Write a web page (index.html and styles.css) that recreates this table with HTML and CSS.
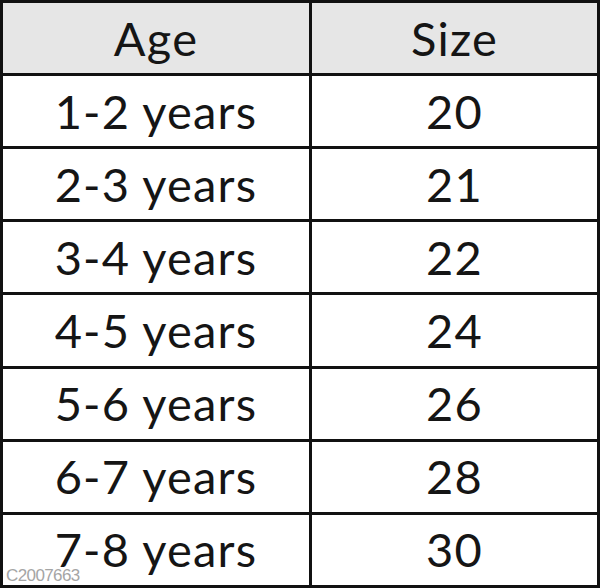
FILE: index.html
```html
<!DOCTYPE html>
<html>
<head>
<meta charset="utf-8">
<link rel="stylesheet" href="styles.css">
</head>
<body>
<div class="wrap">
<table class="sizes">
<thead>
<tr><th>Age</th><th>Size</th></tr>
</thead>
<tbody>
<tr><td>1-2 years</td><td>20</td></tr>
<tr><td>2-3 years</td><td>21</td></tr>
<tr><td>3-4 years</td><td>22</td></tr>
<tr><td>4-5 years</td><td>24</td></tr>
<tr><td>5-6 years</td><td>26</td></tr>
<tr><td>6-7 years</td><td>28</td></tr>
<tr><td>7-8 years</td><td>30</td></tr>
</tbody>
</table>
<span class="mark">C2007663</span>
</div>
</body>
</html>
```
FILE: styles.css
```css
html, body {
  margin: 0;
  padding: 0;
  background: #fff;
}
.wrap {
  position: relative;
  width: 600px;
  height: 588px;
}
.sizes {
  width: 600px;
  height: 588px;
  border-collapse: collapse;
  table-layout: fixed;
  font-family: Lato, "Liberation Sans", sans-serif;
  font-size: 47px;
  letter-spacing: 1.2px;
  color: #151515;
}
.sizes th, .sizes td {
  border: 3px solid #111;
  text-align: center;
  vertical-align: middle;
  padding: 0;
  font-weight: 400;
  height: 70px;
  line-height: 1;
}
.sizes th:first-child, .sizes td:first-child {
  width: 306px;
}
.sizes th {
  background: #e6e6e6;
}
.mark {
  position: absolute;
  left: 6px;
  bottom: 4px;
  font-family: "Liberation Sans", sans-serif;
  font-size: 17px;
  line-height: 1;
  letter-spacing: -0.6px;
  color: #a5a5a5;
}
```
